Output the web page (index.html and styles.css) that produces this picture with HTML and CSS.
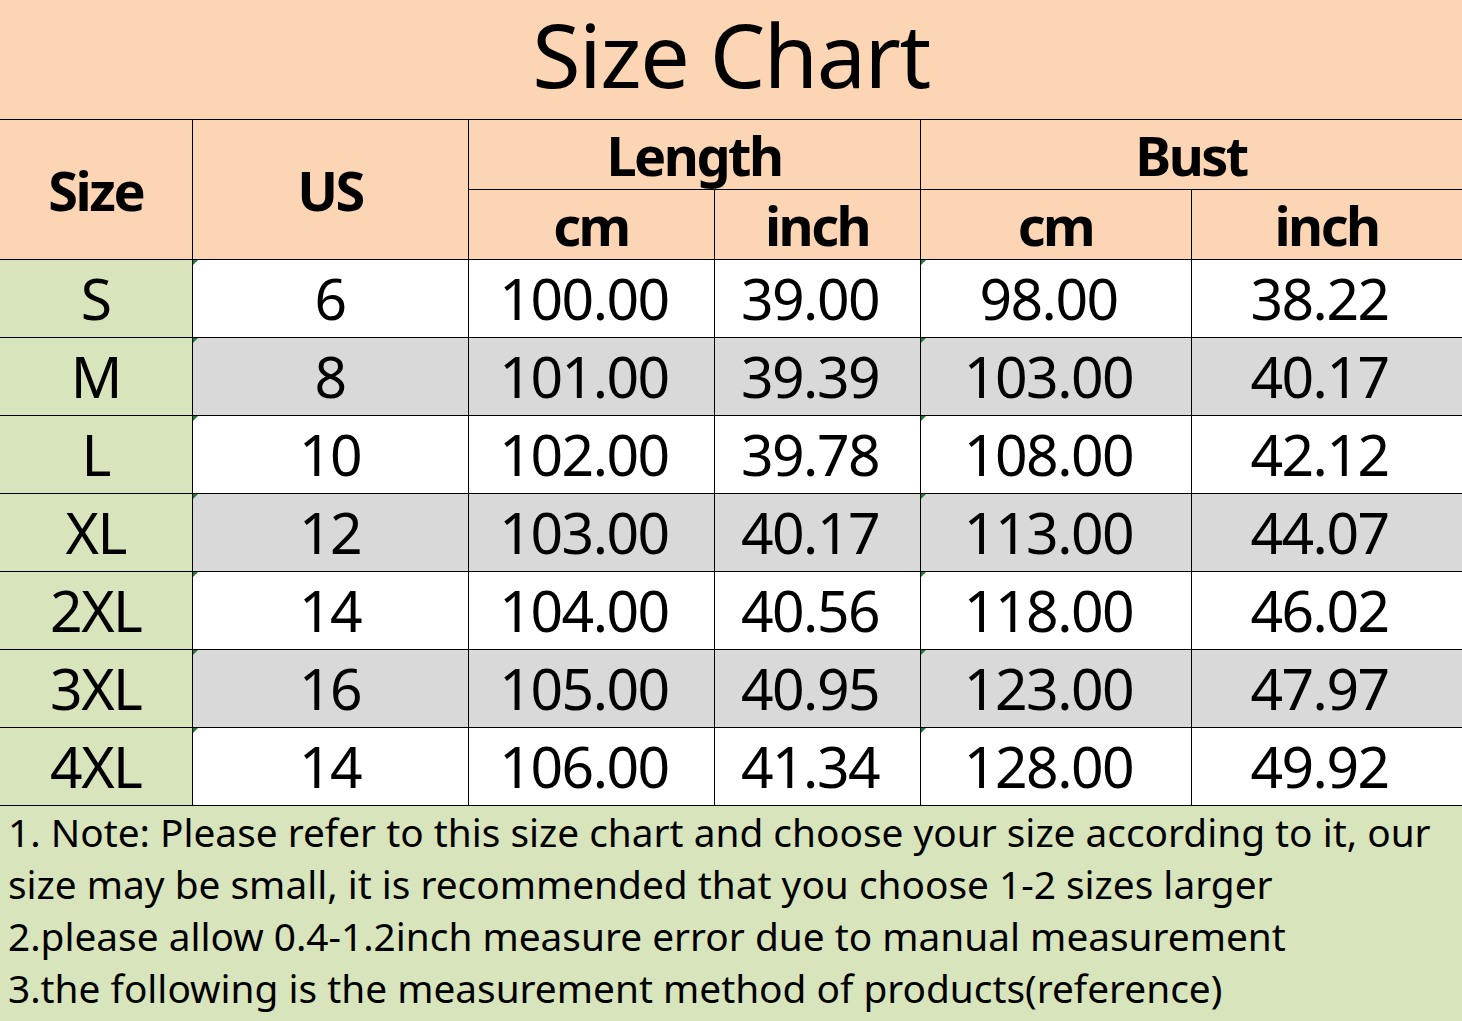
FILE: index.html
```html
<!DOCTYPE html>
<html lang="en">
<head>
<meta charset="utf-8">
<title>Size Chart</title>
<link rel="stylesheet" href="styles.css">
</head>
<body>
<div class="page">
  <header class="title"><span class="sq">Size Chart</span></header>
  <table class="chart">
    <colgroup>
      <col class="c-size"><col class="c-us"><col class="c-lcm"><col class="c-lin"><col class="c-bcm"><col class="c-bin">
    </colgroup>
    <thead>
      <tr class="h1">
        <th rowspan="2" class="first"><span class="sq">Size</span></th>
        <th rowspan="2"><span class="sq">US</span></th>
        <th colspan="2"><span class="sq">Length</span></th>
        <th colspan="2" class="last"><span class="sq">Bust</span></th>
      </tr>
      <tr class="h2">
        <th><span class="sq">cm</span></th>
        <th><span class="sq">inch</span></th>
        <th><span class="sq">cm</span></th>
        <th class="last"><span class="sq">inch</span></th>
      </tr>
    </thead>
    <tbody>
      <tr><td class="first"><span class="sq">S</span></td><td class="mark"><span class="sq">6</span></td><td class="num"><span class="sq">100.00</span></td><td class="num"><span class="sq">39.00</span></td><td class="mark num"><span class="sq">98.00</span></td><td class="last num"><span class="sq">38.22</span></td></tr>
      <tr class="alt"><td class="first"><span class="sq">M</span></td><td class="mark"><span class="sq">8</span></td><td class="num"><span class="sq">101.00</span></td><td class="num"><span class="sq">39.39</span></td><td class="mark num"><span class="sq">103.00</span></td><td class="last num"><span class="sq">40.17</span></td></tr>
      <tr><td class="first"><span class="sq">L</span></td><td class="mark"><span class="sq">10</span></td><td class="num"><span class="sq">102.00</span></td><td class="num"><span class="sq">39.78</span></td><td class="mark num"><span class="sq">108.00</span></td><td class="last num"><span class="sq">42.12</span></td></tr>
      <tr class="alt"><td class="first"><span class="sq">XL</span></td><td class="mark"><span class="sq">12</span></td><td class="num"><span class="sq">103.00</span></td><td class="num"><span class="sq">40.17</span></td><td class="mark num"><span class="sq">113.00</span></td><td class="last num"><span class="sq">44.07</span></td></tr>
      <tr><td class="first"><span class="sq">2XL</span></td><td class="mark"><span class="sq">14</span></td><td class="num"><span class="sq">104.00</span></td><td class="num"><span class="sq">40.56</span></td><td class="mark num"><span class="sq">118.00</span></td><td class="last num"><span class="sq">46.02</span></td></tr>
      <tr class="alt"><td class="first"><span class="sq">3XL</span></td><td class="mark"><span class="sq">16</span></td><td class="num"><span class="sq">105.00</span></td><td class="num"><span class="sq">40.95</span></td><td class="mark num"><span class="sq">123.00</span></td><td class="last num"><span class="sq">47.97</span></td></tr>
      <tr><td class="first"><span class="sq">4XL</span></td><td class="mark"><span class="sq">14</span></td><td class="num"><span class="sq">106.00</span></td><td class="num"><span class="sq">41.34</span></td><td class="mark num"><span class="sq">128.00</span></td><td class="last num"><span class="sq">49.92</span></td></tr>
    </tbody>
  </table>
  <div class="notes">
    <p class="line">1. Note: Please refer to this size chart and choose your size according to it, our</p>
    <p class="line">size may be small, it is recommended that you choose 1-2 sizes larger</p>
    <p class="line">2.please allow 0.4-1.2inch measure error due to manual measurement</p>
    <p class="line">3.the following is the measurement method of products(reference)</p>
  </div>
</div>
</body>
</html>
```
FILE: styles.css
```css
html, body {
  margin: 0;
  padding: 0;
  background: #ffffff;
}

.page {
  width: 1462px;
  height: 1021px;
  display: flex;
  flex-direction: column;
  font-family: "Noto Sans", "Open Sans", sans-serif;
  color: #000;
  overflow: hidden;
}

.title {
  flex: none;
  height: 119px;
  background: #fcd5b4;
  display: flex;
  align-items: center;
  justify-content: center;
  font-size: 88px;
  line-height: 1.2;
  letter-spacing: -1.5px;
  padding-bottom: 10px;
  box-sizing: border-box;
}

.sq {
  display: inline-block;
}

.chart {
  width: 1462px;
  border-collapse: collapse;
  table-layout: fixed;
  flex: none;
}

.c-size { width: 192px; }
.c-us { width: 276px; }
.c-lcm { width: 246px; }
.c-lin { width: 206px; }
.c-bcm { width: 271px; }
.c-bin { width: 271px; }

.chart th,
.chart td {
  border: 1px solid #000;
  padding: 0;
  text-align: center;
  vertical-align: middle;
  position: relative;
}

.chart th {
  background: #fcd5b4;
  font-weight: 700;
  font-size: 54px;
  line-height: 1;
  letter-spacing: -2.5px;
}

.chart .h1 th,
.chart .h2 th {
  height: 69px;
}

.chart td {
  height: 77px;
  font-size: 57px;
  line-height: 1;
  letter-spacing: -1.5px;
  background: #ffffff;
}

.chart td.num {
  padding-right: 14px;
}

.chart tr.alt td {
  background: #d9d9d9;
}

.chart td.first,
.chart tr.alt td.first {
  background: #d8e4bc;
}

.chart .first {
  border-left: none;
}

.chart td.mark::before {
  content: "";
  position: absolute;
  top: 0;
  left: 0;
  border-top: 5px solid #1f7a33;
  border-right: 5px solid transparent;
}

.notes {
  flex: 1;
  background: #d8e4bc;
  padding: 0 0 0 8px;
  font-size: 38.8px;
  line-height: 52px;
}

.line {
  margin: 0;
  white-space: nowrap;
}
```
